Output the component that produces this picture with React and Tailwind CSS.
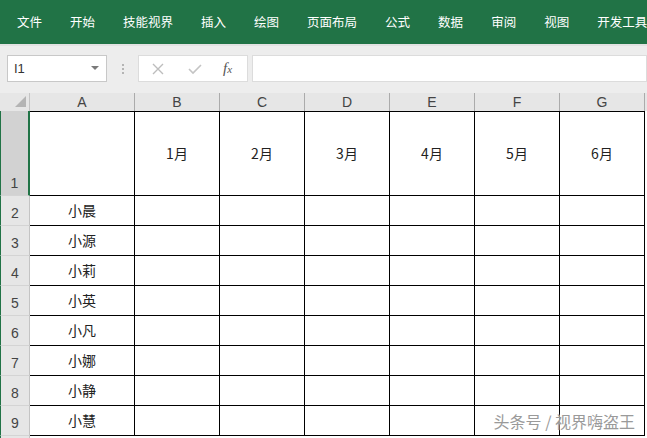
import React from "react";

const tabs = ["文件", "开始", "技能视界", "插入", "绘图", "页面布局", "公式", "数据", "审阅", "视图", "开发工具"];
const cols = ["A", "B", "C", "D", "E", "F", "G"];
const months = ["1月", "2月", "3月", "4月", "5月", "6月"];
const names = ["小晨", "小源", "小莉", "小英", "小凡", "小娜", "小静", "小慧"];

// widths include the right border line
const colW = ["w-[105px]", "w-[85px]", "w-[85px]", "w-[85px]", "w-[85px]", "w-[85px]", "w-[85px]"];

function RowHead({ n, tall, active }) {
  return (
    <div
      className={`w-[30px] shrink-0 flex items-end justify-center pb-[1px] border-l border-l-[#217346] border-b border-b-[#d4d4d4] text-[14px] text-[#444] ${
        active ? "bg-[#d2d2d2] border-r-2 border-r-[#217346]" : "bg-[#e6e6e6] border-r border-r-[#c4c4c4]"
      } ${tall ? "h-[85px]" : "h-[30px]"}`}
    >
      {n}
    </div>
  );
}

export default function App() {
  return (
    <div className="w-[647px] h-[438px] overflow-hidden relative bg-white font-['Liberation_Sans','Noto_Sans_CJK_SC',sans-serif]">
      {/* Ribbon tabs */}
      <div className="h-[44px] bg-[#217346] flex items-center pl-[17px] gap-[28px] text-white text-[12.5px] font-['Noto_Sans_CJK_SC',sans-serif] whitespace-nowrap overflow-hidden">
        {tabs.map((t) => (
          <span key={t} className="shrink-0">{t}</span>
        ))}
      </div>

      {/* Formula bar */}
      <div className="h-[49px] bg-[#ededed] border-t-2 border-t-[#e2e2e2] flex items-start pt-[9px]">
        <div className="ml-[7px] w-[100px] h-[27px] bg-white border border-[#c8c8c8] flex items-center justify-between pl-[6px] pr-[7px]">
          <span className="text-[13px] text-[#333]">I1</span>
          <svg width="8" height="5" viewBox="0 0 8 5">
            <path d="M0 0 L8 0 L4 4 Z" fill="#7a7a7a" />
          </svg>
        </div>
        <div className="w-[31px] h-[27px] flex flex-col items-center justify-center gap-[2px]">
          <span className="w-[2px] h-[2px] bg-[#b4b4b4]" />
          <span className="w-[2px] h-[2px] bg-[#b4b4b4]" />
          <span className="w-[2px] h-[2px] bg-[#b4b4b4]" />
        </div>
        <div className="w-[110px] h-[27px] bg-white border border-[#dcdcdc] flex items-center pl-[13px]">
          <svg width="12" height="12" viewBox="0 0 12 12">
            <path d="M1 1 L11 11 M11 1 L1 11" stroke="#bdbdbd" strokeWidth="1.4" />
          </svg>
          <svg width="14" height="12" viewBox="0 0 14 12" className="ml-[24px]">
            <path d="M1 6 L5 10 L13 2" stroke="#c4c4c4" strokeWidth="1.6" fill="none" />
          </svg>
          <span className="ml-[21px] text-[15px] italic text-[#555] font-['Liberation_Serif',serif]">
            f<span className="text-[11px]">x</span>
          </span>
        </div>
        <div className="ml-[4px] flex-1 h-[27px] bg-white border border-[#dcdcdc]" />
      </div>

      {/* Column headers */}
      <div className="flex h-[18px] bg-[#e6e6e6]">
        <div className="w-[30px] shrink-0 relative border-r border-r-[#c4c4c4]">
          <svg width="11" height="11" viewBox="0 0 11 11" className="absolute left-[15px] top-[3px]">
            <path d="M11 0 L11 11 L0 11 Z" fill="#b4b4b4" />
          </svg>
        </div>
        {cols.map((c, i) => (
          <div
            key={c}
            className={`${colW[i]} shrink-0 flex items-center justify-center border-r border-r-[#ababab] text-[14px] text-[#444]`}
          >
            {c}
          </div>
        ))}
        <div className="flex-1" />
      </div>

      {/* Row 1 */}
      <div className="flex">
        <RowHead n={1} tall active />
        <div className="flex border-t border-b border-black h-[85px]">
          {cols.map((c, i) => (
            <div
              key={c}
              className={`${colW[i]} shrink-0 flex items-center justify-center border-r border-black text-[14px] text-[#222] font-['Noto_Sans_CJK_SC',sans-serif]`}
            >
              {i > 0 ? months[i - 1] : ""}
            </div>
          ))}
        </div>
      </div>

      {/* Name rows */}
      {names.map((name, r) => (
        <div key={name} className="flex">
          <RowHead n={r + 2} />
          <div className="flex border-b border-black h-[30px]">
            {cols.map((c, i) => (
              <div
                key={c}
                className={`${colW[i]} shrink-0 flex items-center justify-center border-r border-black text-[14px] text-[#222] font-['Noto_Sans_CJK_SC',sans-serif]`}
              >
                {i === 0 ? name : ""}
              </div>
            ))}
          </div>
        </div>
      ))}
      <div className="flex">
        <RowHead n="" />
      </div>

      {/* Watermark */}
      <div className="absolute right-[12px] bottom-[5px] text-[16px] text-[#9a9a9a] font-['Noto_Sans_CJK_SC',sans-serif] [text-shadow:0_0_2px_#fff]">
        头条号 / 视界嗨盗王
      </div>
    </div>
  );
}
